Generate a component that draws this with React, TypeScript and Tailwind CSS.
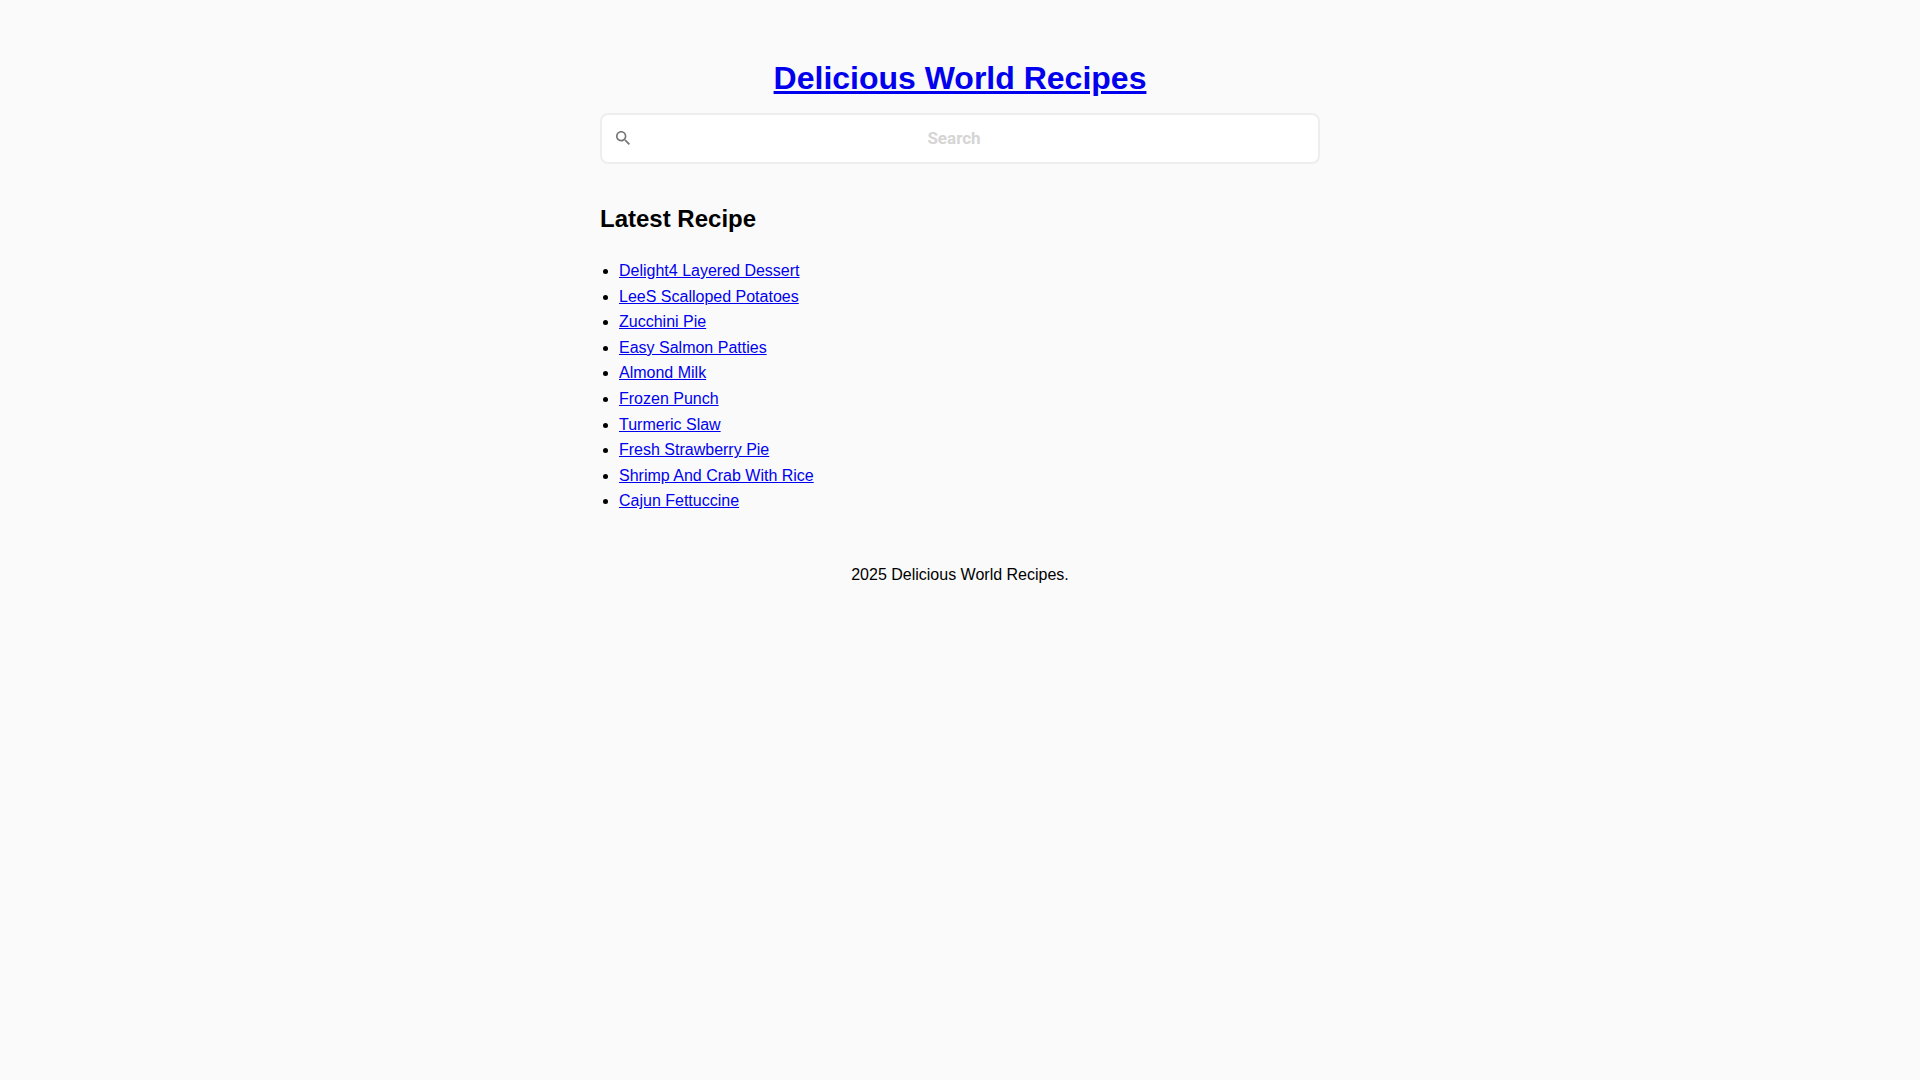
const recipes = [
  "Delight4 Layered Dessert",
  "LeeS Scalloped Potatoes",
  "Zucchini Pie",
  "Easy Salmon Patties",
  "Almond Milk",
  "Frozen Punch",
  "Turmeric Slaw",
  "Fresh Strawberry Pie",
  "Shrimp And Crab With Rice",
  "Cajun Fettuccine",
];

export default function App() {
  return (
    <div className="min-h-screen bg-[#fafafa] px-4 pt-14 font-['Liberation_Sans',Arial,sans-serif] text-base text-black">
      <div className="mx-auto max-w-[720px]">
        <header>
          <h1 className="text-center text-[32px] leading-[44px] font-bold">
            <a href="#home" className="text-[#0000ee] underline">
              Delicious World Recipes
            </a>
          </h1>
          <form
            role="search"
            className="mt-[13px] flex h-[51px] items-center rounded-lg border-2 border-[#eeeeee] bg-white pb-px"
            onSubmit={(e) => e.preventDefault()}
          >
            <button type="submit" aria-label="Submit search" className="ml-3.5 shrink-0">
              <svg viewBox="3 3 17.5 17.5" className="size-3.5" fill="#757575" aria-hidden="true">
                <path d="M15.5 14h-.79l-.28-.27C15.41 12.59 16 11.11 16 9.5 16 5.91 13.09 3 9.5 3S3 5.91 3 9.5 5.91 16 9.5 16c1.61 0 3.09-.59 4.23-1.57l.27.28v.79l5 4.99L20.49 19l-4.99-5zm-6 0C7.01 14 5 11.99 5 9.5S7.01 5 9.5 5 14 7.01 14 9.5 11.99 14 9.5 14z" />
              </svg>
            </button>
            <input
              type="search"
              aria-label="Search"
              placeholder="Search"
              className="h-full min-w-0 flex-1 bg-transparent pr-6 text-center font-[Roboto,sans-serif] text-[17px] font-bold text-black outline-none placeholder:text-[#d5d5d5]"
            />
          </form>
        </header>
        <main>
          <h2 className="mt-[39px] text-2xl font-bold">Latest Recipe</h2>
          <ul className="mt-[23px] list-disc pl-[19px] leading-[1.6]">
            {recipes.map((name) => (
              <li key={name}>
                <a href="#recipe" className="text-[#0000ee] underline">
                  {name}
                </a>
              </li>
            ))}
          </ul>
        </main>
        <footer className="mt-12 text-center leading-[26px]">2025 Delicious World Recipes.</footer>
      </div>
    </div>
  );
}
